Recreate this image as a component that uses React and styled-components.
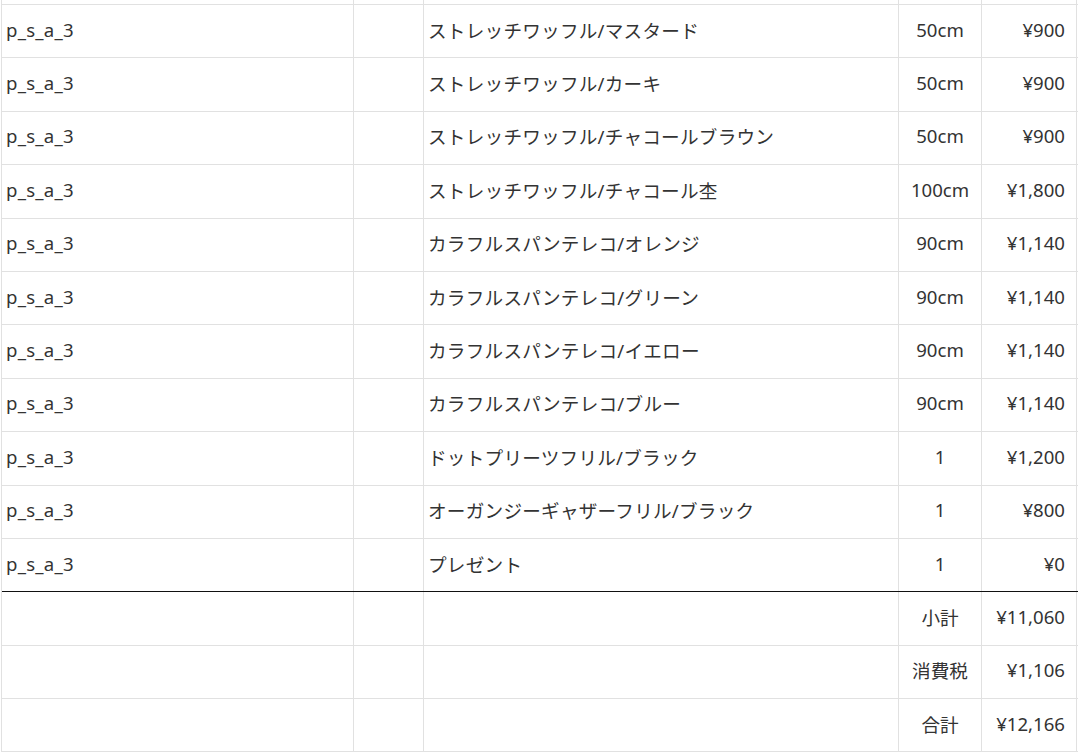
import React from "react";
import styled, { createGlobalStyle } from "styled-components";

const GlobalStyle = createGlobalStyle`
  body {
    margin: 0;
    background: #ffffff;
    font-family: "Noto Sans", "Noto Sans CJK JP", sans-serif;
    color: #333333;
  }
`;

const COLUMNS = "352px 70px 475px 83px 95px";
const LINE = "#e1e1e1";

const Sheet = styled.div`
  width: 1076px;
  margin-left: 1px;
  border-left: 1px solid ${LINE};
  overflow: hidden;
`;

const Row = styled.div`
  display: grid;
  grid-template-columns: ${COLUMNS};
  height: ${(p) => p.$height || "53.4px"};
  box-sizing: border-box;
  border-bottom: 1px solid ${(p) => (p.$strong ? "#111111" : LINE)};
`;

const Cell = styled.div`
  display: flex;
  align-items: center;
  justify-content: ${(p) =>
    p.$align === "right" ? "flex-end" : p.$align === "center" ? "center" : "flex-start"};
  padding: ${(p) => (p.$align === "right" ? "0 11px 4px 0" : p.$align === "center" ? "0 0 4px 0" : "0 0 4px 4px")};
  border-right: 1px solid ${LINE};
  font-size: 18.6px;
  letter-spacing: ${(p) => (p.$align ? "0" : "0.25px")};
  white-space: nowrap;
  overflow: hidden;
`;

const items = [
  ["ストレッチワッフル/マスタード", "50cm", "¥900"],
  ["ストレッチワッフル/カーキ", "50cm", "¥900"],
  ["ストレッチワッフル/チャコールブラウン", "50cm", "¥900"],
  ["ストレッチワッフル/チャコール杢", "100cm", "¥1,800"],
  ["カラフルスパンテレコ/オレンジ", "90cm", "¥1,140"],
  ["カラフルスパンテレコ/グリーン", "90cm", "¥1,140"],
  ["カラフルスパンテレコ/イエロー", "90cm", "¥1,140"],
  ["カラフルスパンテレコ/ブルー", "90cm", "¥1,140"],
  ["ドットプリーツフリル/ブラック", "1", "¥1,200"],
  ["オーガンジーギャザーフリル/ブラック", "1", "¥800"],
  ["プレゼント", "1", "¥0"],
];

const totals = [
  ["小計", "¥11,060"],
  ["消費税", "¥1,106"],
  ["合計", "¥12,166"],
];

export default function App() {
  return (
    <>
      <GlobalStyle />
      <Sheet>
        {/* tail of the row scrolled off above */}
        <Row $height="5px">
          <Cell />
          <Cell />
          <Cell />
          <Cell />
          <Cell />
        </Row>
        {items.map(([name, qty, price], i) => (
          <Row key={i} $strong={i === items.length - 1}>
            <Cell>p_s_a_3</Cell>
            <Cell />
            <Cell>{name}</Cell>
            <Cell $align="center">{qty}</Cell>
            <Cell $align="right">{price}</Cell>
          </Row>
        ))}
        {totals.map(([label, value]) => (
          <Row key={label}>
            <Cell />
            <Cell />
            <Cell />
            <Cell $align="center">{label}</Cell>
            <Cell $align="right">{value}</Cell>
          </Row>
        ))}
      </Sheet>
    </>
  );
}
